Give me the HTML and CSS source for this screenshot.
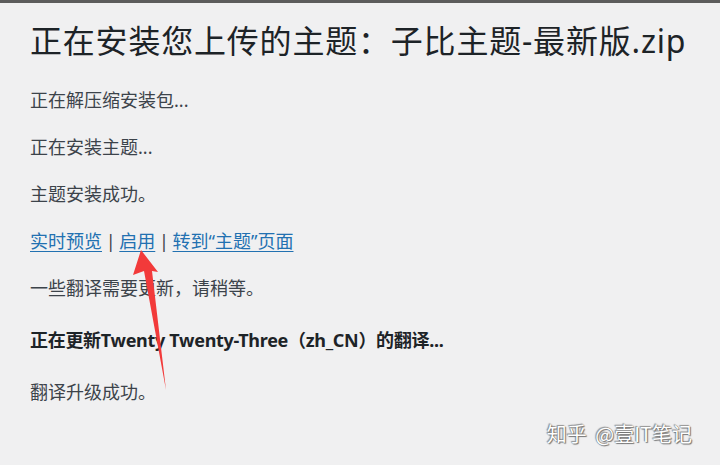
FILE: index.html
```html
<!DOCTYPE html>
<html lang="zh-CN">
<head>
<meta charset="utf-8">
<title>安装主题</title>
<link rel="stylesheet" href="styles.css">
</head>
<body>
<div class="wrap">
  <h1 class="title">正在安装您上传的主题：子比主题-最新版.zip</h1>
  <p class="msg">正在解压缩安装包...</p>
  <p class="msg">正在安装主题...</p>
  <p class="msg">主题安装成功。</p>
  <p class="msg links"><a href="#">实时预览</a> | <a href="#">启用</a> | <a href="#">转到“主题”页面</a></p>
  <p class="msg">一些翻译需要更新，请稍等。</p>
  <h2 class="msg strong">正在更新Twenty Twenty-Three（zh_CN）的翻译...</h2>
  <p class="msg">翻译升级成功。</p>
</div>
<svg class="arrow" width="720" height="465" viewBox="0 0 720 465">
  <polygon points="141,250 158,272 152,271 166,390 144,271 133,275" fill="#f23a3a"/>
</svg>
<div class="watermark">知乎 @壹IT笔记</div>
</body>
</html>
```

FILE: styles.css
```css
html, body {
  margin: 0;
  padding: 0;
  background: #f0f0f1;
}
body {
  width: 720px;
  height: 465px;
  overflow: hidden;
  border-top: 3px solid #5c5c5c;
  box-sizing: border-box;
  position: relative;
  font-family: "Noto Sans", "Noto Sans CJK SC", sans-serif;
}
.wrap {
  padding: 17px 20px 0 30px;
}
.title {
  margin: 0 0 25px 0;
  font-size: 32px;
  line-height: 42px;
  font-weight: 400;
  color: #1d2327;
  letter-spacing: 0.8px;
  white-space: nowrap;
}
.msg {
  margin: 20px 0;
  font-size: 18px;
  line-height: 27px;
  color: #3c434a;
  font-weight: 400;
}
.links {
  word-spacing: -1px;
}
.links a {
  color: #2271b1;
  text-decoration: underline;
  text-underline-offset: 3px;
  word-spacing: 0;
}
.strong {
  margin: 25px 0;
  font-weight: 700;
  color: #1d2327;
  letter-spacing: -0.3px;
}
.arrow {
  position: absolute;
  left: 0;
  top: -3px;
}
.watermark {
  position: absolute;
  right: 28px;
  bottom: 17px;
  font-size: 20px;
  color: #ffffff;
  word-spacing: 4px;
  text-shadow: 0 0 1px #555, 1px 1px 1px #777, -1px -1px 1px #999;
  font-family: "Noto Sans CJK SC", sans-serif;
}
```
